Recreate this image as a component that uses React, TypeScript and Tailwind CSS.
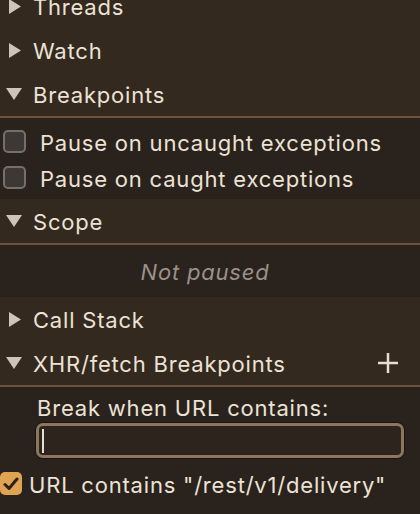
import React from "react";

const font = { fontFamily: "Inter, 'Noto Sans', 'Liberation Sans', sans-serif", letterSpacing: "0.8px" };

function Right() {
  return (
    <svg width="12" height="15" viewBox="0 0 12 15" className="ml-[9px] mr-[12px] shrink-0">
      <path d="M0 0 L12 7.5 L0 15 Z" fill="#cfc4b7" />
    </svg>
  );
}
function Down() {
  return (
    <svg width="16" height="12" viewBox="0 0 16 12" className="ml-[6px] mr-[11px] shrink-0">
      <path d="M0 0 L16 0 L8 12 Z" fill="#cfc4b7" />
    </svg>
  );
}

function Header({ label, open, plus, sep }: { label: string; open?: boolean; plus?: boolean; sep?: boolean }) {
  return (
    <div className={`box-content flex items-center h-[44px] bg-[#33291f] ${sep ? "border-b-2 border-[#6b5239]" : ""}`}>
      {open ? <Down /> : <Right />}
      <span className="text-[22px] text-[#ece2d5] leading-none pt-[2px]">{label}</span>
      {plus && (
        <svg width="20" height="20" viewBox="0 0 20 20" className="ml-auto mr-[22px]">
          <path d="M10 0 V20 M0 10 H20" stroke="#e6ddd2" strokeWidth="2.5" />
        </svg>
      )}
    </div>
  );
}

function Box() {
  return <div className="w-[23px] h-[23px] rounded-[5px] border-2 border-[#77706a] bg-[#3b3836] shrink-0" />;
}

export default function App() {
  return (
    <div className="w-[420px] h-[514px] overflow-hidden bg-[#2a221d]" style={font}>
      <div className="-mt-[16px]">
        <Header label="Threads" />
        <Header label="Watch" />
        <Header label="Breakpoints" open sep />
        <div className="h-[81px] pt-[12px] flex flex-col gap-[13px]">
          <div className="flex items-center h-[23px] pl-[3px]">
            <Box />
            <span className="ml-[14px] text-[22px] text-[#ece2d5] leading-none pt-[3px]">Pause on uncaught exceptions</span>
          </div>
          <div className="flex items-center h-[23px] pl-[3px]">
            <Box />
            <span className="ml-[14px] text-[22px] text-[#ece2d5] leading-none pt-[3px]">Pause on caught exceptions</span>
          </div>
        </div>
        <Header label="Scope" open sep />
        <div className="h-[52px] flex items-center justify-center pt-[2px] pr-[10px]">
          <span className="italic text-[22px] text-[#9a9189] leading-none">Not paused</span>
        </div>
        <Header label="Call Stack" />
        <Header label="XHR/fetch Breakpoints" open plus sep />
        <div className="pl-[37px] pt-[10px]">
          <div className="text-[22px] text-[#ece2d5] leading-none h-[22px]">Break when URL contains:</div>
        </div>
        <div className="pl-[35px] pr-[15px] pt-[3px]">
          <div className="h-[37px] rounded-[8px] border border-[#1a1512]">
            <div className="h-full rounded-[7px] border-[3px] border-[#8d7660] bg-[#2e241e] flex items-center pl-[3px]">
              <div className="w-[2px] h-[24px] bg-[#e8dfd4]" />
            </div>
          </div>
        </div>
        <div className="flex items-center h-[23px] mt-[13px]">
          <div className="w-[22px] h-[23px] rounded-[5px] bg-[#e0a352] flex items-center justify-center shrink-0">
            <svg width="16" height="14" viewBox="0 0 16 14">
              <path d="M2 7.5 L6 11.5 L14 2" stroke="#2a221d" strokeWidth="3" fill="none" strokeLinecap="round" strokeLinejoin="round" />
            </svg>
          </div>
          <span className="ml-[7px] text-[22px] text-[#ece2d5] leading-none pt-[3px]">URL contains "/rest/v1/delivery"</span>
        </div>
      </div>
    </div>
  );
}
